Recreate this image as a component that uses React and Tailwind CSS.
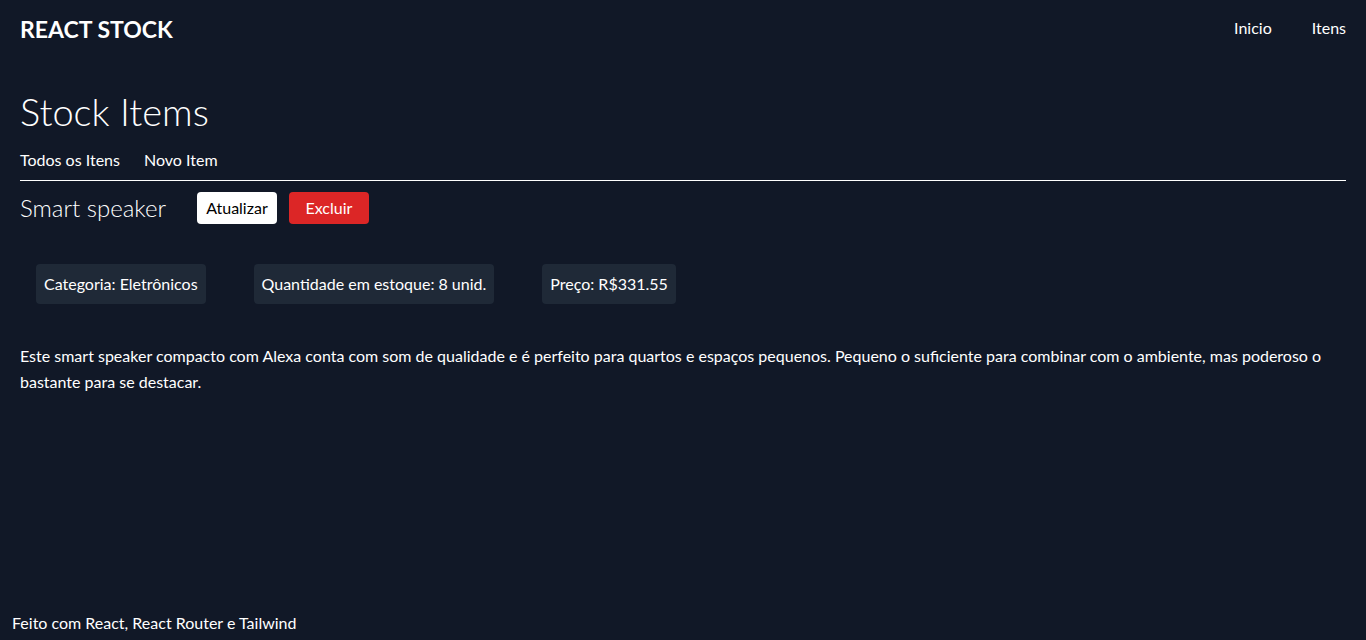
const item = {
  name: 'Smart speaker',
  category: 'Eletrônicos',
  quantity: 8,
  price: 331.55,
  description:
    'Este smart speaker compacto com Alexa conta com som de qualidade e é perfeito para quartos e espaços pequenos. Pequeno o suficiente para combinar com o ambiente, mas poderoso o bastante para se destacar.',
};

export default function App() {
  return (
    <div className="min-h-screen flex flex-col bg-[#111827] text-white font-['Lato',sans-serif]">
      {/* Header */}
      <header className="h-[58px] px-5 flex items-center justify-between">
        <h1 className="text-[23px] font-bold leading-8">REACT STOCK</h1>
        <nav className="flex gap-10 text-base -mt-0.5">
          <a href="#">Inicio</a>
          <a href="#">Itens</a>
        </nav>
      </header>

      <main className="flex-1 px-5 pt-[33px]">
        <h2 className="text-[38px] font-light leading-10">Stock Items</h2>

        <div className="mt-[17px] pb-2 border-b border-white flex gap-6 text-base leading-6">
          <a href="#">Todos os Itens</a>
          <a href="#">Novo Item</a>
        </div>

        <div className="mt-[11px] flex items-center">
          <h3 className="text-2xl font-light mr-[31px]">{item.name}</h3>
          <button className="w-20 h-8 rounded bg-white text-black text-base">Atualizar</button>
          <button className="ml-3 w-20 h-8 rounded bg-[#dc2626] text-white text-base">Excluir</button>
        </div>

        <div className="mt-10 ml-4 flex gap-12">
          <div className="h-10 px-2 flex items-center rounded bg-[#1f2937]">Categoria: {item.category}</div>
          <div className="h-10 px-2 flex items-center rounded bg-[#1f2937]">
            Quantidade em estoque: {item.quantity} unid.
          </div>
          <div className="h-10 px-2 flex items-center rounded bg-[#1f2937]">Preço: R${item.price}</div>
        </div>

        <p className="mt-[39px] leading-[26px]">{item.description}</p>
      </main>

      <footer className="px-3 pb-[5px] leading-6">Feito com React, React Router e Tailwind</footer>
    </div>
  );
}
